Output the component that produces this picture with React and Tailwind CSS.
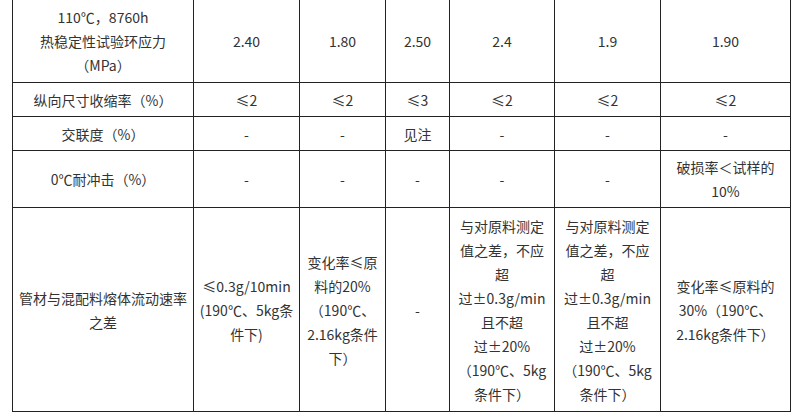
import React from 'react';

// column widths measured between the grid lines (each includes its right border)
const cols = ['w-[181px]', 'w-[106px]', 'w-[86px]', 'w-[64px]', 'w-[105px]', 'w-[106px]', 'w-[130px]'];

const rows = [
  {
    h: 'h-[83px]',
    cells: [
      ['110℃，8760h', '热稳定性试验环应力', '（MPa）'],
      ['2.40'],
      ['1.80'],
      ['2.50'],
      ['2.4'],
      ['1.9'],
      ['1.90'],
    ],
  },
  {
    h: 'h-[34px]',
    cells: [['纵向尺寸收缩率（%）'], ['≤2'], ['≤2'], ['≤3'], ['≤2'], ['≤2'], ['≤2']],
  },
  {
    h: 'h-[34px]',
    cells: [['交联度（%）'], ['-'], ['-'], ['见注'], ['-'], ['-'], ['-']],
  },
  {
    h: 'h-[57px]',
    cells: [['0℃耐冲击（%）'], ['-'], ['-'], ['-'], ['-'], ['-'], ['破损率＜试样的', '10%']],
  },
  {
    h: 'h-[204px]',
    cells: [
      ['管材与混配料熔体流动速率', '之差'],
      ['≤0.3g/10min', '(190℃、5kg条', '件下)'],
      ['变化率≤原', '料的20%', '（190℃、', '2.16kg条件', '下）'],
      ['-'],
      ['与对原料测定', '值之差，不应', '超', '过±0.3g/min', '且不超', '过±20%', '（190℃、5kg', '条件下）'],
      ['与对原料测定', '值之差，不应', '超', '过±0.3g/min', '且不超', '过±20%', '（190℃、5kg', '条件下）'],
      ['变化率≤原料的', '30%（190℃、', '2.16kg条件下）'],
    ],
  },
];

export default function App() {
  return (
    <div className="w-[796px] h-[417px] overflow-hidden bg-white">
      <div
        className="ml-[12px] mt-[-1px] w-[779px] border-l border-t border-[#222] text-[14px] leading-[24px] text-[#333]"
        style={{ fontFamily: '"Noto Sans CJK SC", "Noto Sans", sans-serif' }}
      >
        {rows.map((row, ri) => (
          <div key={ri} className="flex">
            {row.cells.map((lines, ci) => (
              <div
                key={ci}
                className={`${cols[ci]} ${row.h} shrink-0 border-r border-b border-[#222] flex flex-col items-center justify-center text-center whitespace-nowrap`}
              >
                {lines.map((t, li) => (
                  <span key={li}>{t}</span>
                ))}
              </div>
            ))}
          </div>
        ))}
      </div>
    </div>
  );
}
